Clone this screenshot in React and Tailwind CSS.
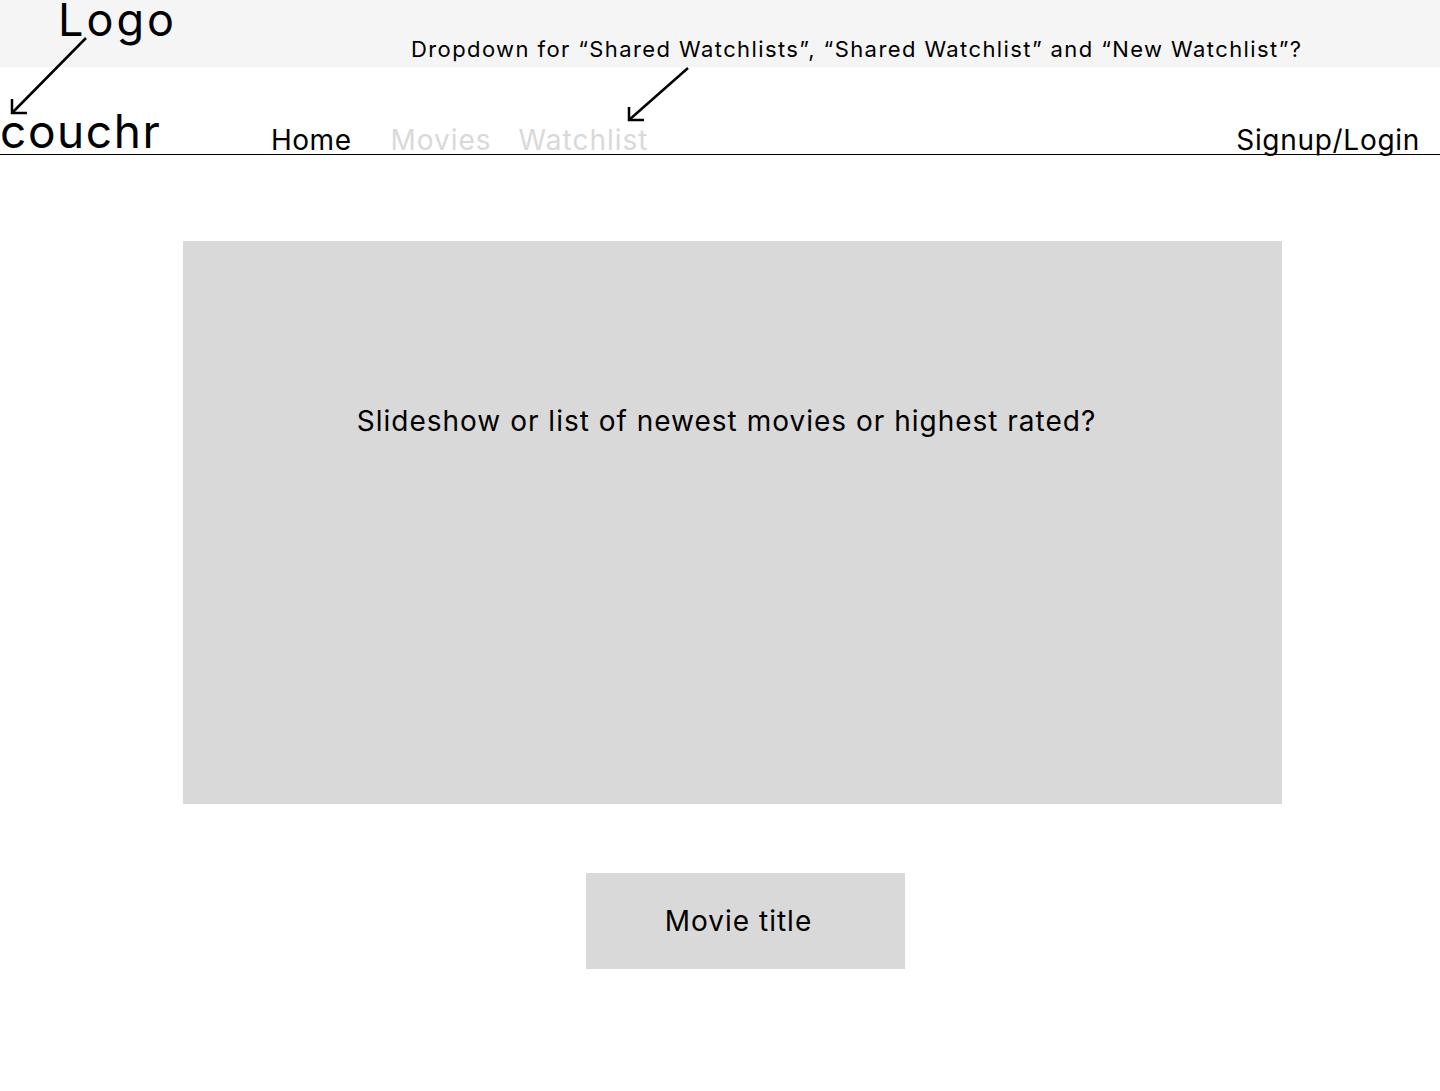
export default function App() {
  return (
    <div className="relative min-h-[1091px] bg-white text-black" style={{ fontFamily: 'Inter, "Noto Sans", sans-serif' }}>
      {/* annotation band */}
      <div className="relative h-[67px] bg-[#f5f5f5]">
        <span className="absolute left-[58px] top-[1px] text-[45px] leading-[38px] tracking-[3px]">Logo</span>
        <span className="absolute left-[411px] top-[38px] text-[22px] leading-none tracking-[1.4px]">
          Dropdown for “Shared Watchlists”, “Shared Watchlist” and “New Watchlist”?
        </span>
      </div>

      {/* nav */}
      <header className="flex h-[88px] items-end border-b border-black">
        <div className="w-[271px] text-[46px] leading-none tracking-[1.6px]">couchr</div>
        <nav className="flex items-end gap-[39px] text-[28px] leading-none">
          <a className="tracking-[0.5px] text-black">Home</a>
          <div className="flex items-end gap-[27px]">
            <a className="tracking-[1px] text-[#d9d9d9]">Movies</a>
            <a className="tracking-[1px] text-[#d9d9d9]">Watchlist</a>
          </div>
        </nav>
        <a className="ml-auto mr-[20px] text-[28px] leading-none tracking-[0.7px]">Signup/Login</a>
      </header>

      {/* arrows */}
      <svg className="pointer-events-none absolute left-0 top-0" width="700" height="130" viewBox="0 0 700 130" fill="none" stroke="black" strokeWidth="2.5">
        <path d="M86 38 L12 113" />
        <path d="M12 99 L12 113 L27 113" />
        <path d="M688 68 L629 120" />
        <path d="M629 107 L629 120 L644 120" />
      </svg>

      <main className="flex flex-col pt-[86px]">
        <div className="ml-[183px] h-[563px] w-[1099px] bg-[#d9d9d9] pt-[159px] text-center text-[28px] tracking-[1px]">
          <p className="pr-[12px]">Slideshow or list of newest movies or highest rated?</p>
        </div>
        <div className="ml-[586px] mt-[69px] flex h-[96px] w-[319px] items-center justify-center bg-[#d9d9d9] text-[28px] tracking-[1px]">
          <span className="pr-[14px]">Movie title</span>
        </div>
      </main>
    </div>
  );
}
